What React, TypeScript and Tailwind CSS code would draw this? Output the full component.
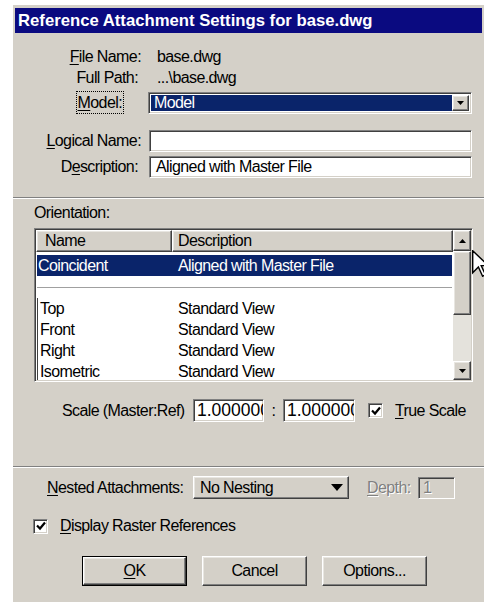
import React from 'react';

// classic 3D bevels
const sunken =
  'border border-t-[#808080] border-l-[#808080] border-b-white border-r-white shadow-[inset_1px_1px_0_#404040,inset_-1px_-1px_0_#d4d0c8]';
const raised =
  'border border-t-white border-l-white border-b-[#404040] border-r-[#404040] shadow-[inset_-1px_-1px_0_#808080,inset_1px_1px_0_#e8e6e1]';

function Mn({ children }: { children: React.ReactNode }) {
  return <span className="underline underline-offset-[2px] decoration-1">{children}</span>;
}

function Tri({ dir = 'down', w = 7, h = 4 }: { dir?: 'up' | 'down'; w?: number; h?: number }) {
  const pts = dir === 'down' ? `0,0 ${w},0 ${w / 2},${h}` : `0,${h} ${w},${h} ${w / 2},0`;
  return (
    <svg width={w} height={h} viewBox={`0 0 ${w} ${h}`}>
      <polygon points={pts} fill="#000" />
    </svg>
  );
}

function Check() {
  return (
    <div className={`w-[15px] h-[15px] bg-white p-[1px] ${sunken} flex items-center justify-center`}>
      <svg width="10" height="10" viewBox="0 0 10 10">
        <polyline points="1,4.5 4,7.5 9,1.5" fill="none" stroke="#000" strokeWidth="2.2" />
      </svg>
    </div>
  );
}

function Label({ children, pr }: { children: React.ReactNode; pr: string }) {
  return <div className={`w-[126px] shrink-0 text-right ${pr}`}>{children}</div>;
}

const orientations = [
  { name: 'Top', desc: 'Standard View' },
  { name: 'Front', desc: 'Standard View' },
  { name: 'Right', desc: 'Standard View' },
  { name: 'Isometric', desc: 'Standard View' },
];

export default function App() {
  return (
    <div className="relative w-[484px] h-[603px] overflow-hidden bg-white font-['Liberation_Sans',Arial,sans-serif] text-[16px] tracking-[-0.6px] text-black">
      <div className="ml-[13px] mt-[5px] w-[471px] h-[597px] bg-[#d4d0c8] pt-[3px] px-[2px] flex flex-col">
        {/* title bar */}
        <div className="h-[25px] shrink-0 bg-[#0a0a80] flex items-center pl-[3px] text-white font-bold text-[16.7px] tracking-normal">
          Reference Attachment Settings for base.dwg
        </div>

        {/* file info */}
        <div className="mt-[14px] h-[20px] flex items-center">
          <Label pr="pr-0">
            <Mn>F</Mn>ile Name:
          </Label>
          <div className="ml-[8px] pl-[8px]">base.dwg</div>
        </div>
        <div className="mt-[1px] h-[20px] flex items-center">
          <Label pr="pr-[3px]">Full Path:</Label>
          <div className="ml-[8px] pl-[8px]">...\base.dwg</div>
        </div>
        <div className="mt-[4px] h-[22px] flex items-center">
          <Label pr="pr-[18px]">
            <span className="outline outline-1 outline-dotted outline-black px-[1px] py-[2px]">
              <Mn>M</Mn>odel:
            </span>
          </Label>
          <div className={`ml-[7px] w-[324px] h-[22px] bg-white p-[2px] flex ${sunken}`}>
            <div className="flex-1 bg-[#0a246a] text-white pl-[3px] flex items-center">Model</div>
            <div className={`w-[17px] bg-[#d4d0c8] flex items-center justify-center ${raised}`}>
              <Tri />
            </div>
          </div>
        </div>

        <div className="mt-[16px] h-[22px] flex items-center">
          <Label pr="pr-0">
            <Mn>L</Mn>ogical Name:
          </Label>
          <div className={`ml-[8px] w-[323px] h-[22px] bg-white ${sunken}`} />
        </div>
        <div className="mt-[4px] h-[22px] flex items-center">
          <Label pr="pr-[3px]">
            D<Mn>e</Mn>scription:
          </Label>
          <div className={`ml-[8px] w-[323px] h-[22px] bg-white pl-[6px] flex items-center ${sunken}`}>
            Aligned with Master File
          </div>
        </div>

        <div className="mt-[19px] -mx-[2px] border-t border-t-[#808080] border-b border-b-white" />

        {/* orientation list */}
        <div className="mt-[5px] ml-[19px] h-[18px] flex items-center">Orientation:</div>
        <div className={`mt-[6px] ml-[19px] w-[439px] h-[154px] shrink-0 bg-white p-[1px] flex overflow-hidden ${sunken}`}>
          <div className="flex-1 flex flex-col overflow-hidden">
            <div className="h-[22px] shrink-0 flex bg-[#d4d0c8]">
              <div className={`w-[136px] pl-[8px] flex items-center ${raised}`}>Name</div>
              <div className={`flex-1 pl-[5px] flex items-center ${raised}`}>Description</div>
            </div>
            <div className="mt-[3px] mx-[1px] h-[21px] shrink-0 bg-[#0a246a] text-white flex items-center">
              <div className="w-[141px] pl-[1px]">Coincident</div>
              <div>Aligned with Master File</div>
            </div>
            <div className="h-[22px] shrink-0 mx-[1px] flex items-center">
              <div className="w-full border-t border-t-[#a0a0a0]" />
            </div>
            <div className="ml-[1px] border-l border-l-[#404040]">
              {orientations.map((o) => (
                <div key={o.name} className="h-[21px] flex items-center">
                  <div className="w-[140px] pl-[2px]">{o.name}</div>
                  <div>{o.desc}</div>
                </div>
              ))}
            </div>
          </div>
          <div className="w-[18px] shrink-0 bg-[#e4e2dc] flex flex-col">
            <div className={`h-[21px] bg-[#d4d0c8] flex items-center justify-center ${raised}`}>
              <Tri dir="up" />
            </div>
            <div className={`h-[64px] bg-[#d4d0c8] ${raised}`} />
            <div className={`mt-auto h-[19px] bg-[#d4d0c8] flex items-center justify-center ${raised}`}>
              <Tri />
            </div>
          </div>
        </div>

        {/* scale */}
        <div className="mt-[17px] h-[23px] flex items-center">
          <div className="ml-[47px] w-[131px]">Scale (Master:Ref)</div>
          <div className={`w-[71px] h-[23px] bg-white pl-[3px] flex items-center overflow-hidden whitespace-nowrap text-[17.5px] tracking-normal ${sunken}`}>
            1.000000
          </div>
          <div className="w-[19px] text-center">:</div>
          <div className={`w-[72px] h-[23px] bg-white pl-[3px] flex items-center overflow-hidden whitespace-nowrap text-[17.5px] tracking-normal ${sunken}`}>
            1.000000
          </div>
          <div className="ml-[13px]">
            <Check />
          </div>
          <div className="ml-[12px]">
            <Mn>T</Mn>rue Scale
          </div>
        </div>

        <div className="mt-[44px] -mx-[2px] border-t border-t-[#808080] border-b border-b-white" />

        {/* nesting */}
        <div className="mt-[8px] h-[23px] flex items-center">
          <div className="ml-[32px] w-[146px]">
            <Mn>N</Mn>ested Attachments:
          </div>
          <div className={`w-[156px] h-[23px] pl-[6px] pr-[5px] flex items-center justify-between ${raised}`}>
            <span>No Nesting</span>
            <Tri w={12} h={7} />
          </div>
          <div className="ml-[18px] w-[51px] text-[#808080] [text-shadow:1px_1px_0_#fff]">
            <Mn>D</Mn>epth:
          </div>
          <div className={`w-[37px] h-[22px] pl-[4px] flex items-center text-[#808080] [text-shadow:1px_1px_0_#fff] ${sunken}`}>
            1
          </div>
        </div>

        <div className="mt-[19px] h-[16px] flex items-center">
          <div className="ml-[18px]">
            <Check />
          </div>
          <div className="ml-[12px]">
            <Mn>D</Mn>isplay Raster References
          </div>
        </div>

        {/* buttons */}
        <div className="mt-[22px] ml-[67px] flex gap-[15px]">
          <div className="w-[105px] h-[30px] border border-black">
            <div className={`h-full flex items-center justify-center ${raised}`}>
              <span>
                <Mn>O</Mn>K
              </span>
            </div>
          </div>
          <div className={`w-[105px] h-[30px] flex items-center justify-center ${raised}`}>Cancel</div>
          <div className={`w-[105px] h-[30px] flex items-center justify-center ${raised}`}>Options...</div>
        </div>
      </div>

      {/* mouse pointer resting at the scrollbar edge */}
      <svg className="absolute left-[472px] top-[250px]" width="17" height="27" viewBox="0 0 12 19">
        <polygon
          points="0.5,0.5 0.5,16 4.5,12 7.5,18.5 9.5,17.5 6.5,11 11.5,11"
          fill="#fff"
          stroke="#000"
          strokeWidth="1"
          strokeLinejoin="miter"
        />
      </svg>
    </div>
  );
}
